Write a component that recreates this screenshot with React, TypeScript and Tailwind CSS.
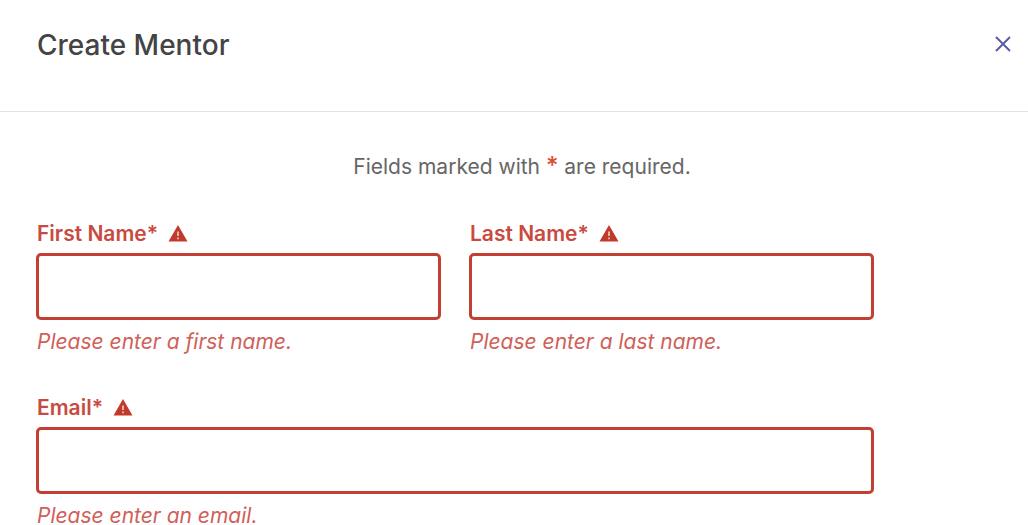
import React from "react";

function WarningIcon() {
  return (
    <svg viewBox="0 0 20 18" className="h-[18px] w-5 shrink-0" aria-hidden="true">
      <path d="M10 0 L19.5 16.5 H0.5 Z" fill="#c23a2c" />
      <path d="M9.2 6.5 H10.8 V11 H9.2 Z M9.2 12.4 H10.8 V14.2 H9.2 Z" fill="#f3cfca" />
    </svg>
  );
}

type FieldProps = { id: string; label: string; error: string; type?: string };

function Field({ id, label, error, type = "text" }: FieldProps) {
  return (
    <div className="flex min-w-0 flex-1 flex-col">
      <label htmlFor={id} className="ml-px flex items-center gap-2.5 text-[21px] leading-7 font-semibold text-[#c94a3f]">
        {label}*
        <WarningIcon />
      </label>
      <input
        id={id}
        type={type}
        aria-invalid="true"
        aria-describedby={`${id}-error`}
        className="mt-[5px] h-[67px] w-full rounded-[5px] border-3 border-[#c23f34] bg-white px-4 text-xl text-[#444] outline-none"
      />
      <p id={`${id}-error`} className="mt-3 ml-px text-[21px] leading-5 text-[#d0605a] italic">
        {error}
      </p>
    </div>
  );
}

export default function App() {
  return (
    <main className="min-h-screen bg-white font-['Inter',sans-serif]">
      <header className="flex items-start justify-between border-b border-[#e3e3e3] pt-[29px] pr-4 pb-[50px] pl-[37px]">
        <h1 className="text-[28px] leading-8 font-medium text-[#444444]">Create Mentor</h1>
        <button type="button" aria-label="Close" className="mt-1.5 text-[#5a5ca3]">
          <svg viewBox="0 0 18 18" className="size-[18px]" fill="none" stroke="currentColor" strokeWidth="2">
            <path d="M2 2 L16 16 M16 2 L2 16" />
          </svg>
        </button>
      </header>
      <form noValidate className="pt-[41px] pr-[154px] pl-9">
        <p className="pl-[134px] text-center text-[21px] leading-7 text-[#666666]">
          Fields marked with <span className="text-2xl leading-6 font-medium text-[#dc4b32]">*</span> are required.
        </p>
        <div className="mt-[39px] flex gap-7">
          <Field id="first-name" label="First Name" error="Please enter a first name." />
          <Field id="last-name" label="Last Name" error="Please enter a last name." />
        </div>
        <div className="mt-[42px] flex">
          <Field id="email" label="Email" type="email" error="Please enter an email." />
        </div>
      </form>
    </main>
  );
}
